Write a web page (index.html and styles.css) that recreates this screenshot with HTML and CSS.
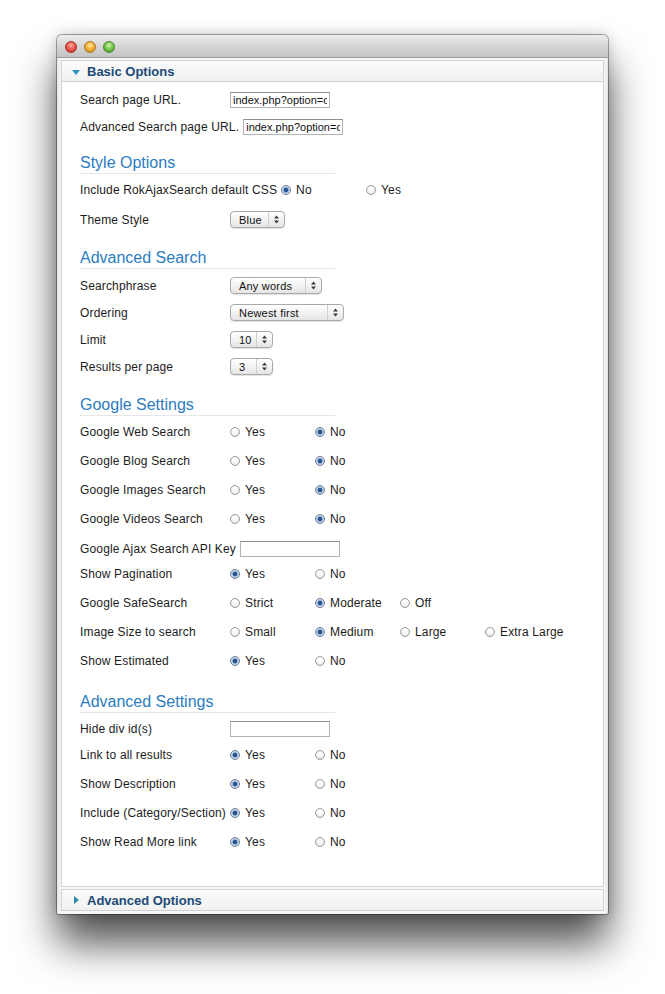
FILE: index.html
```html
<!DOCTYPE html>
<html>
<head>
<meta charset="utf-8">
<title>RokAjaxSearch</title>
<link rel="stylesheet" href="styles.css">
</head>
<body>
<div class="window">
  <div class="titlebar">
    <span class="light red"></span>
    <span class="light yellow"></span>
    <span class="light green"></span>
  </div>
  <div class="page">
    <div class="pane">
      <div class="pane-head"><span class="tri-down"></span>Basic Options</div>
      <div class="pane-body">
        <div class="row row-input"><span class="label">Search page URL.</span><input class="text" type="text" value="index.php?option=com_search"></div>
        <div class="row row-input"><span class="label">Advanced Search page URL.</span><input class="text" type="text" value="index.php?option=com_search"></div>

        <h3 class="group-title first">Style Options</h3>
        <div class="row row-radio"><span class="label">Include RokAjaxSearch default CSS</span><span class="opt"><span class="radio on"></span>No</span><span class="opt"><span class="radio"></span>Yes</span></div>
        <div class="row row-select shift2"><span class="label">Theme Style</span><span class="select w55"><span class="val">Blue</span><span class="arr"><svg width="5" height="9" viewBox="0 0 5 9"><path d="M2.5 0.5 L5 3.5 H0 Z M0 5.5 H5 L2.5 8.5 Z" fill="#3a3a3a"/></svg></span></span></div>

        <h3 class="group-title g15">Advanced Search</h3>
        <div class="row row-select shift3"><span class="label">Searchphrase</span><span class="select w92"><span class="val">Any words</span><span class="arr"><svg width="5" height="9" viewBox="0 0 5 9"><path d="M2.5 0.5 L5 3.5 H0 Z M0 5.5 H5 L2.5 8.5 Z" fill="#3a3a3a"/></svg></span></span></div>
        <div class="row row-select"><span class="label">Ordering</span><span class="select w114"><span class="val">Newest first</span><span class="arr"><svg width="5" height="9" viewBox="0 0 5 9"><path d="M2.5 0.5 L5 3.5 H0 Z M0 5.5 H5 L2.5 8.5 Z" fill="#3a3a3a"/></svg></span></span></div>
        <div class="row row-select"><span class="label">Limit</span><span class="select w43"><span class="val">10</span><span class="arr"><svg width="5" height="9" viewBox="0 0 5 9"><path d="M2.5 0.5 L5 3.5 H0 Z M0 5.5 H5 L2.5 8.5 Z" fill="#3a3a3a"/></svg></span></span></div>
        <div class="row row-select"><span class="label">Results per page</span><span class="select w43"><span class="val">3</span><span class="arr"><svg width="5" height="9" viewBox="0 0 5 9"><path d="M2.5 0.5 L5 3.5 H0 Z M0 5.5 H5 L2.5 8.5 Z" fill="#3a3a3a"/></svg></span></span></div>

        <h3 class="group-title g15">Google Settings</h3>
        <div class="row row-radio"><span class="label">Google Web Search</span><span class="opt"><span class="radio"></span>Yes</span><span class="opt"><span class="radio on"></span>No</span></div>
        <div class="row row-radio"><span class="label">Google Blog Search</span><span class="opt"><span class="radio"></span>Yes</span><span class="opt"><span class="radio on"></span>No</span></div>
        <div class="row row-radio"><span class="label">Google Images Search</span><span class="opt"><span class="radio"></span>Yes</span><span class="opt"><span class="radio on"></span>No</span></div>
        <div class="row row-radio"><span class="label">Google Videos Search</span><span class="opt"><span class="radio"></span>Yes</span><span class="opt"><span class="radio on"></span>No</span></div>
        <div class="row row-input row-api"><span class="label">Google Ajax Search API Key</span><input class="text" type="text" value=""></div>
        <div class="row row-radio"><span class="label">Show Pagination</span><span class="opt"><span class="radio on"></span>Yes</span><span class="opt"><span class="radio"></span>No</span></div>
        <div class="row row-radio"><span class="label">Google SafeSearch</span><span class="opt"><span class="radio"></span>Strict</span><span class="opt"><span class="radio on"></span>Moderate</span><span class="opt"><span class="radio"></span>Off</span></div>
        <div class="row row-radio"><span class="label">Image Size to search</span><span class="opt"><span class="radio"></span>Small</span><span class="opt"><span class="radio on"></span>Medium</span><span class="opt"><span class="radio"></span>Large</span><span class="opt"><span class="radio"></span>Extra Large</span></div>
        <div class="row row-radio"><span class="label">Show Estimated</span><span class="opt"><span class="radio on"></span>Yes</span><span class="opt"><span class="radio"></span>No</span></div>

        <h3 class="group-title g17">Advanced Settings</h3>
        <div class="row row-input row-hide"><span class="label">Hide div id(s)</span><input class="text" type="text" value=""></div>
        <div class="row row-radio"><span class="label">Link to all results</span><span class="opt"><span class="radio on"></span>Yes</span><span class="opt"><span class="radio"></span>No</span></div>
        <div class="row row-radio"><span class="label">Show Description</span><span class="opt"><span class="radio on"></span>Yes</span><span class="opt"><span class="radio"></span>No</span></div>
        <div class="row row-radio"><span class="label">Include (Category/Section)</span><span class="opt"><span class="radio on"></span>Yes</span><span class="opt"><span class="radio"></span>No</span></div>
        <div class="row row-radio"><span class="label">Show Read More link</span><span class="opt"><span class="radio on"></span>Yes</span><span class="opt"><span class="radio"></span>No</span></div>
      </div>
    </div>
    <div class="pane collapsed">
      <div class="pane-head"><span class="tri-right"></span>Advanced Options</div>
    </div>
  </div>
</div>
</body>
</html>
```

FILE: styles.css
```css
html, body {
  margin: 0;
  padding: 0;
  background: #ffffff;
}

body {
  font-family: "Liberation Sans", Arial, sans-serif;
  font-size: 12px;
  color: #1c1c1c;
  padding: 35px 0 80px 57px;
}

.window {
  width: 551px;
  height: 879px;
  border-radius: 5px 5px 2px 2px;
  background: #f2f2f2;
  box-shadow: 0 0 0 1px rgba(0, 0, 0, 0.32), 0 0 14px rgba(0, 0, 0, 0.2), 0 30px 42px rgba(0, 0, 0, 0.68);
  display: flex;
  flex-direction: column;
  overflow: hidden;
}

.titlebar {
  height: 22px;
  flex: none;
  border-bottom: 1px solid #9d9d9d;
  background: linear-gradient(#ececec, #d6d6d6 50%, #c4c4c4);
  display: flex;
  align-items: center;
  gap: 7px;
  padding-left: 8px;
  border-radius: 5px 5px 0 0;
}

.light {
  width: 12px;
  height: 12px;
  border-radius: 50%;
  box-sizing: border-box;
  margin-top: 1px;
}

.light.red {
  background: radial-gradient(circle at 50% 35%, #ffb0a8 0, #f05a4f 45%, #b8271f 100%);
  border: 1px solid #a8322b;
}

.light.yellow {
  background: radial-gradient(circle at 50% 35%, #ffe7a0 0, #f3b33a 45%, #b87a10 100%);
  border: 1px solid #a9781f;
}

.light.green {
  background: radial-gradient(circle at 50% 35%, #d4f5b0 0, #79c94e 45%, #3e8a1f 100%);
  border: 1px solid #4a8a2d;
}

.page {
  flex: 1;
  min-height: 0;
  padding: 2px 4px 3px 4px;
  background: linear-gradient(90deg, #e6e6e6, #f7f7f7 4px, #f7f7f7 calc(100% - 4px), #e6e6e6);
  display: flex;
  flex-direction: column;
}

.pane-head {
  height: 20px;
  border: 1px solid #d2d2d2;
  background: linear-gradient(#fbfbfb, #f1f1f1);
  display: flex;
  align-items: center;
  padding-left: 10px;
  font-weight: bold;
  font-size: 13px;
  color: #1b4a76;
}

.tri-down {
  width: 0;
  height: 0;
  border-left: 4px solid transparent;
  border-right: 4px solid transparent;
  border-top: 5px solid #2e8fc2;
  margin-right: 7px;
  margin-top: 2px;
}

.tri-right {
  width: 0;
  height: 0;
  border-top: 4px solid transparent;
  border-bottom: 4px solid transparent;
  border-left: 5px solid #2a8aa8;
  margin-left: 2px;
  margin-right: 8px;
}

.pane-body {
  background: #ffffff;
  border: 1px solid #d2d2d2;
  border-top: none;
  padding: 4px 0 30px 18px;
}

.pane.collapsed {
  margin-top: 2px;
}

.row {
  display: flex;
  align-items: center;
  box-sizing: border-box;
  letter-spacing: 0.15px;
}

.row-input {
  height: 27px;
}

.row-radio {
  height: 29px;
}

.row-select {
  height: 27px;
}

.row-api {
  height: 26px;
  padding-top: 5px;
}

.row-hide {
  height: 26px;
  padding-top: 4px;
}

.shift2 {
  margin-top: 2px;
}

.shift3 {
  margin-top: 3px;
}

.label {
  flex: none;
  min-width: 146px;
  padding-right: 4px;
  white-space: nowrap;
}

.text {
  width: 100px;
  height: 16px;
  box-sizing: border-box;
  border: 1px solid #b4b4b4;
  border-top-color: #8f8f8f;
  padding: 0 2px;
  margin: 0;
  font-family: "Liberation Sans", Arial, sans-serif;
  font-size: 11px;
  letter-spacing: 0;
  color: #111;
  background: #fff;
  outline: none;
}

.opt {
  display: inline-flex;
  align-items: center;
  width: 85px;
  flex: none;
  white-space: nowrap;
}

.radio {
  width: 10px;
  height: 10px;
  box-sizing: border-box;
  border-radius: 50%;
  border: 1px solid #9c9c9c;
  background: radial-gradient(circle at 50% 30%, #ffffff 0, #f4f4f4 50%, #dedede 100%);
  margin-right: 5px;
  flex: none;
}

.radio.on {
  border-color: #6d7f95;
  background: radial-gradient(circle, #24508a 0, #2d5a93 2px, #b9cde6 2.8px, #e3edf8 100%);
}

.group-title {
  margin: 14px 0 1px 0;
  width: 255px;
  font-size: 16px;
  line-height: 20px;
  font-weight: normal;
  color: #2b7cbe;
  border-bottom: 1px solid #e6e6e6;
}

.group-title.first {
  margin-top: 13px;
}

.group-title.g15 {
  margin-top: 15px;
}

.group-title.g17 {
  margin-top: 17px;
}

.select {
  display: inline-flex;
  align-items: stretch;
  height: 17px;
  box-sizing: border-box;
  border: 1px solid #a9a9a9;
  border-radius: 4px;
  background: linear-gradient(#ffffff, #f3f3f3 50%, #e4e4e4);
  box-shadow: 0 1px 1px rgba(0, 0, 0, 0.12);
  font-size: 11px;
  letter-spacing: 0.2px;
  color: #111;
}

.select .val {
  flex: 1;
  padding-left: 8px;
  display: flex;
  align-items: center;
}

.select .arr {
  width: 15px;
  border-left: 1px solid #cfcfcf;
  display: flex;
  align-items: center;
  justify-content: center;
}

.w55 { width: 55px; }
.w92 { width: 92px; }
.w114 { width: 114px; }
.w43 { width: 43px; }
```
